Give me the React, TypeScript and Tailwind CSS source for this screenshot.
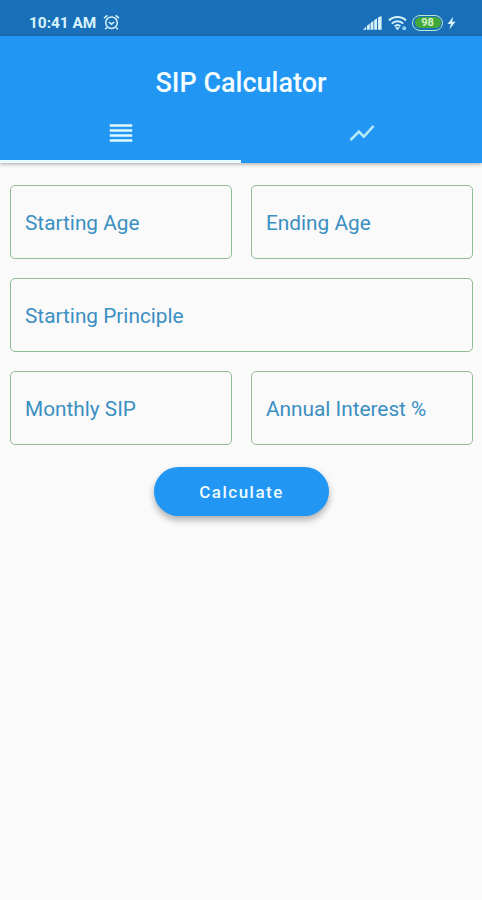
import { useState } from 'react'
import clsx from 'clsx'

const tabs = [
  { id: 'form', label: 'Form', path: 'M3 15h18v-2H3v2zm0 4h18v-2H3v2zm0-8h18V9H3v2zm0-6v2h18V5H3z' },
  { id: 'chart', label: 'Chart', path: 'M3.5 18.49l6-6.01 4 4L22 6.92l-1.41-1.41-7.09 7.97-4-4L2 16.99z' },
]

export default function App() {
  const [tab, setTab] = useState('form')
  return (
    <div className="w-full h-screen flex flex-col bg-[#fafafa] font-['Roboto',sans-serif] overflow-hidden">
      <StatusBar />
      <header className="h-[127px] shrink-0 flex flex-col bg-[#2196f3] shadow-[0_1px_4px_rgba(0,0,0,0.35)]">
        <h1 className="h-[75px] pt-[27px] text-center text-[27px] leading-[40px] font-medium text-[#f3fcff]">SIP Calculator</h1>
        <nav className="flex flex-1">
          {tabs.map((t) => (
            <button
              key={t.id}
              aria-label={t.label}
              onClick={() => setTab(t.id)}
              className={clsx(
                'flex-1 flex justify-center border-b-[3px] pt-[7px]',
                tab === t.id ? 'border-[#e8fbff] text-[#def8fb]' : 'border-transparent text-[#b5e9fa]',
              )}
            >
              <svg viewBox="0 0 24 24" className="size-[30px]" fill="currentColor">
                <path d={t.path} />
              </svg>
            </button>
          ))}
        </nav>
      </header>
      <main className="grid grid-cols-2 gap-x-[19px] gap-y-[19px] pt-[22px] pl-[10px] pr-[9px]">
        <Field label="Starting Age" />
        <Field label="Ending Age" />
        <Field label="Starting Principle" wide />
        <Field label="Monthly SIP" />
        <Field label="Annual Interest %" />
        <button className="col-span-2 justify-self-center mt-[3px] w-[175px] h-[49px] pt-[2px] rounded-full bg-[#2196f3] text-[17px] font-medium tracking-[1.5px] text-[#eefcff] shadow-[0_4px_7px_rgba(0,0,0,0.3)]">
          Calculate
        </button>
      </main>
    </div>
  )
}

function Field({ label, wide }: { label: string; wide?: boolean }) {
  const [value, setValue] = useState('')
  return (
    <label
      className={clsx(
        'relative h-[74px] flex items-center rounded-[5px] border border-[#91bd94] pl-[14px] pt-[4px] text-[20.8px] text-[#3a8fc1]',
        wide && 'col-span-2',
      )}
    >
      {!value && <span className="whitespace-nowrap">{label}</span>}
      <input
        className="absolute inset-0 w-full px-[14px] bg-transparent outline-none"
        value={value}
        onChange={(e) => setValue(e.target.value)}
      />
    </label>
  )
}

function StatusBar() {
  return (
    <div className="h-9 shrink-0 flex items-center bg-[#1a70b8] pl-[29px] pr-[26px] pt-[9px] text-[#d6f3fb]">
      <span className="pt-[2px] text-[15.4px] leading-none font-bold">10:41 AM</span>
      <svg viewBox="0 0 17 17" className="ml-[7px] size-[17px]" fill="none" stroke="currentColor" strokeWidth="1.5">
        <circle cx="8.5" cy="8.7" r="5.8" />
        <path d="M1 4.2l3.4-2.8M16 4.2l-3.4-2.8M3.8 13.5l-1.5 1.7M13.2 13.5l1.5 1.7M5.8 8l2.7 2.2L11.2 8" />
      </svg>
      <div className="ml-auto flex items-center">
        <svg viewBox="0 0 20 14" className="w-5 h-[14px]" fill="currentColor">
          <path d="M0 13.8l3.2-3.2v3.2zM4 9.8l2.8-2.2v6.2H4zM7.6 7l2.8-2.2v9H7.6zM11.2 4.3L14 2.2v11.6h-2.8zM15 1.5L18.6 0v13.8H15z" />
        </svg>
        <svg viewBox="0 0 20 16" className="ml-[5px] w-5 h-4" fill="none" stroke="currentColor" strokeWidth="1.9">
          <path d="M1 5.5C5.5.9 13.5.9 18 5.5M3.8 8.6c3-3.1 8.4-3.1 11.4 0M6.6 11.3c1.7-1.6 4.1-1.6 5.8 0" />
          <path d="M7 12.2L9.5 15.3l2.5-3.1z" fill="currentColor" stroke="none" />
          <circle cx="16.2" cy="13.2" r="2" fill="#8fd0f5" stroke="none" />
        </svg>
        <div className="ml-[4px] w-[31px] h-[16px] rounded-full border-[1.5px] border-[#b9e7d0] p-[1.5px]">
          <div className="h-full rounded-full bg-[#43a83c] flex items-center justify-center text-[11px] leading-none font-bold text-[#d5f5c8]">
            98
          </div>
        </div>
        <svg viewBox="0 0 9 14" className="ml-[4px] w-[9px] h-[14px]" fill="currentColor">
          <path d="M6.2.8L.5 8h3.3l-1.3 5.3L8.6 5.8H5.2z" />
        </svg>
      </div>
    </div>
  )
}
